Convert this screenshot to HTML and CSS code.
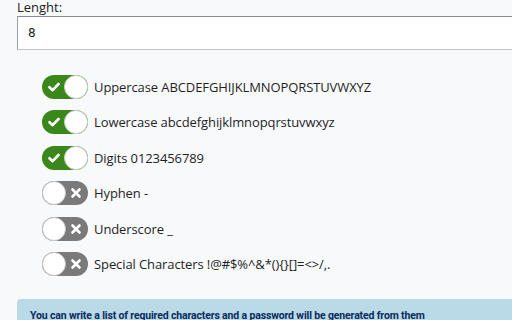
FILE: index.html
```html
<!DOCTYPE html>
<html lang="en">

<head>
    <meta charset="UTF-8">
    <meta name="viewport" content="width=device-width, initial-scale=1.0">
    <title>Password Generator</title>
    <link rel="stylesheet" href="styles.css">
</head>

<body>

    <div class="page">
        <label class="field-label" for="length">Lenght:</label>
        <input type="text" id="length" class="length-input" value="8">

        <ul class="options">
            <li class="option">
                <span class="toggle on">
                    <svg class="mark" viewBox="0 0 12 12"><path d="M1.5 6.2 L4.6 9.2 L10.5 3" /></svg>
                    <span class="knob"></span>
                </span>
                <span class="option-text">Uppercase ABCDEFGHIJKLMNOPQRSTUVWXYZ</span>
            </li>
            <li class="option">
                <span class="toggle on">
                    <svg class="mark" viewBox="0 0 12 12"><path d="M1.5 6.2 L4.6 9.2 L10.5 3" /></svg>
                    <span class="knob"></span>
                </span>
                <span class="option-text">Lowercase abcdefghijklmnopqrstuvwxyz</span>
            </li>
            <li class="option">
                <span class="toggle on">
                    <svg class="mark" viewBox="0 0 12 12"><path d="M1.5 6.2 L4.6 9.2 L10.5 3" /></svg>
                    <span class="knob"></span>
                </span>
                <span class="option-text">Digits 0123456789</span>
            </li>
            <li class="option">
                <span class="toggle off">
                    <span class="knob"></span>
                    <svg class="mark" viewBox="0 0 12 12"><path d="M2.5 2.5 L9.5 9.5 M9.5 2.5 L2.5 9.5" /></svg>
                </span>
                <span class="option-text">Hyphen -</span>
            </li>
            <li class="option">
                <span class="toggle off">
                    <span class="knob"></span>
                    <svg class="mark" viewBox="0 0 12 12"><path d="M2.5 2.5 L9.5 9.5 M9.5 2.5 L2.5 9.5" /></svg>
                </span>
                <span class="option-text">Underscore _</span>
            </li>
            <li class="option">
                <span class="toggle off">
                    <span class="knob"></span>
                    <svg class="mark" viewBox="0 0 12 12"><path d="M2.5 2.5 L9.5 9.5 M9.5 2.5 L2.5 9.5" /></svg>
                </span>
                <span class="option-text">Special Characters !@#$%^&amp;*(){}[]=&lt;&gt;/,.</span>
            </li>
        </ul>

        <div class="info">
            You can write a list of required characters and a password will be generated from them
        </div>
    </div>

</body>

</html>
```

FILE: styles.css
```css
html, body {
    margin: 0;
    padding: 0;
    height: 100%;
    overflow: hidden;
}

body {
    background-color: #f8f9fb;
    font-family: 'Open Sans', 'Noto Sans', sans-serif;
    color: #1c1c1c;
}

.page {
    padding-left: 17px;
}

.field-label {
    display: block;
    font-size: 13px;
    line-height: 14px;
    color: #222;
}

.length-input {
    display: block;
    box-sizing: border-box;
    width: calc(100% + 40px);
    height: 34px;
    margin-top: 2px;
    padding: 0 10px;
    border: 1px solid #c4c4c4;
    border-top-color: #868b94;
    border-left-color: #9a9ea6;
    background: #ffffff;
    font-family: 'DejaVu Sans', sans-serif;
    font-size: 12px;
    color: #222;
    outline: none;
}

.options {
    list-style: none;
    margin: 19px 0 0 0;
    padding: 0 0 0 25px;
}

.option {
    display: flex;
    align-items: center;
    height: 35.5px;
}

.toggle {
    display: flex;
    align-items: center;
    box-sizing: border-box;
    width: 46px;
    height: 24px;
    border-radius: 12px;
    flex-shrink: 0;
}

.toggle.on {
    background-color: #3a871c;
    justify-content: space-between;
    padding-left: 6px;
}

.toggle.off {
    background-color: #7a7a7a;
    justify-content: space-between;
    padding-right: 6px;
}

.knob {
    box-sizing: border-box;
    width: 24px;
    height: 24px;
    border-radius: 50%;
    background: #ffffff;
    border: 1px solid #c9d3c5;
}

.toggle.off .knob {
    border-color: #c6c6c6;
}

.mark {
    width: 12px;
    height: 12px;
    fill: none;
    stroke: #ffffff;
    stroke-width: 2.6;
    stroke-linecap: round;
    stroke-linejoin: round;
}

.option-text {
    margin-left: 6px;
    font-size: 13px;
    letter-spacing: -0.1px;
    color: #1f1f1f;
}

.info {
    margin-top: 17px;
    background-color: #b9dae6;
    border-radius: 4px 0 0 0;
    padding: 10px 13px;
    font-family: Roboto, 'Open Sans', sans-serif;
    font-size: 10.5px;
    letter-spacing: -0.15px;
    font-weight: bold;
    color: #0b2a5c;
}
```
